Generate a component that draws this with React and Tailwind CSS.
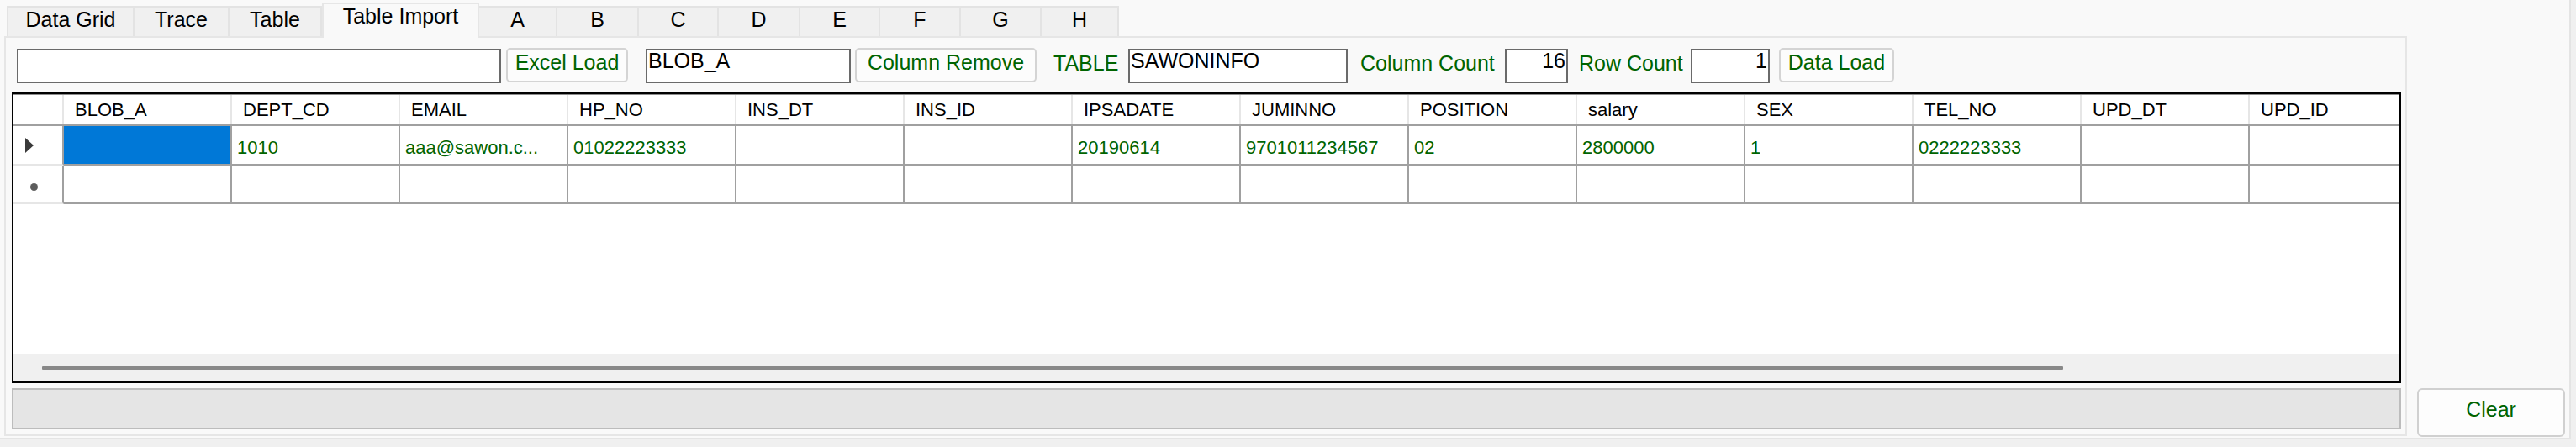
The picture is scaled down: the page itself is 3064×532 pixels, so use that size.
import React from 'react';

const tabs = [
  { label: 'Data Grid', w: 'w-[152px]' },
  { label: 'Trace', w: 'w-[113px]' },
  { label: 'Table', w: 'w-[110px]' },
  { label: 'Table Import', w: 'w-[187px]', active: true },
  { label: 'A', w: 'w-[93px]' },
  { label: 'B', w: 'w-[97px]' },
  { label: 'C', w: 'w-[95px]' },
  { label: 'D', w: 'w-[97px]' },
  { label: 'E', w: 'w-[95px]' },
  { label: 'F', w: 'w-[96px]' },
  { label: 'G', w: 'w-[96px]' },
  { label: 'H', w: 'w-[92px]' },
];

const columns = [
  'BLOB_A', 'DEPT_CD', 'EMAIL', 'HP_NO', 'INS_DT', 'INS_ID', 'IPSADATE',
  'JUMINNO', 'POSITION', 'salary', 'SEX', 'TEL_NO', 'UPD_DT', 'UPD_ID',
];

const row = [
  '', '1010', 'aaa@sawon.c...', '01022223333', '', '', '20190614',
  '9701011234567', '02', '2800000', '1', '0222223333', '', '',
];

function TextBox({ value = '', className = '', right = false }) {
  return (
    <div
      className={`mt-[2px] h-[41px] shrink-0 border-2 border-[#6a6a6a] bg-white px-[1px] text-[25px] leading-[25px] text-black ${right ? 'text-right' : ''} ${className}`}
    >
      {value}
    </div>
  );
}

function Button({ children, className = '' }) {
  return (
    <button
      className={`mt-[1px] flex h-[41px] shrink-0 items-center justify-center rounded-[5px] border-2 border-[#d4d4d4] bg-[#fcfcfc] pb-[6px] text-[25px] text-[#006400] ${className}`}
    >
      {children}
    </button>
  );
}

function Label({ children, className = '' }) {
  return (
    <div className={`flex h-[43px] shrink-0 items-center pb-[4px] text-[25px] text-[#006400] ${className}`}>
      {children}
    </div>
  );
}

export default function App() {
  return (
    <div className="h-[532px] w-[3064px] overflow-hidden bg-[#f0f0f0] font-['Liberation_Sans',Arial,sans-serif]">
      <div className="flex h-[523px] w-[3058px] border-b-2 border-r-2 border-[#e4e4e4] bg-[#f9f9f9]">
        {/* Tab control */}
        <div className="w-[2863px] shrink-0 pl-[5px]">
          <div className="flex h-[43px] items-end pl-[3px]">
            {tabs.map((t, i) =>
              t.active ? (
                <div
                  key={t.label}
                  className={`${t.w} relative z-10 -mb-[2px] h-[42px] shrink-0 border-2 border-b-0 border-[#e6e6e6] bg-[#f9f9f9] text-center text-[25px] leading-[29px] text-black`}
                >
                  {t.label}
                </div>
              ) : (
                <div
                  key={t.label}
                  className={`${t.w} h-[36px] shrink-0 border-r-2 border-t-2 border-[#e3e3e3] bg-[#f0f0f0] text-center text-[25px] leading-[29px] text-black ${i === 0 ? 'border-l-2' : ''}`}
                >
                  {t.label}
                </div>
              )
            )}
          </div>

          {/* Tab page */}
          <div className="flex h-[476px] w-[2858px] flex-col border-2 border-[#e6e6e6] bg-[#f9f9f9] pb-[6px] pl-[7px] pr-[5px] pt-[11px]">
            {/* Toolbar */}
            <div className="flex h-[43px] items-start pl-[6px]">
              <TextBox className="w-[576px]" />
              <Button className="ml-[6px] w-[145px]">Excel Load</Button>
              <TextBox value="BLOB_A" className="ml-[21px] w-[244px]" />
              <Button className="ml-[5px] w-[216px]">Column Remove</Button>
              <Label className="w-[109px] pl-[20px]">TABLE</Label>
              <TextBox value="SAWONINFO" className="w-[261px]" />
              <Label className="w-[187px] pl-[15px]">Column Count</Label>
              <TextBox value="16" right className="w-[75px]" />
              <Label className="w-[146px] pl-[13px]">Row Count</Label>
              <TextBox value="1" right className="w-[94px]" />
              <Button className="ml-[11px] w-[137px]">Data Load</Button>
            </div>

            {/* Grid */}
            <div className="mt-[11px] flex h-[346px] flex-col overflow-hidden border-2 border-black bg-white">
              {/* Header */}
              <div className="flex h-[38px] shrink-0 border-b-2 border-t border-b-[#a0a0a0] border-t-[#8c8c8c] text-[22px] text-black">
                <div className="w-[60px] shrink-0 border-r-2 border-[#e6e6e6]" />
                {columns.map((c) => (
                  <div key={c} className="flex w-[200px] shrink-0 items-center border-r-2 border-[#e6e6e6] pl-[13px]">
                    {c}
                  </div>
                ))}
              </div>

              {/* Data row */}
              <div className="flex h-[47px] shrink-0 text-[22px] text-[#006400]">
                <div className="flex w-[60px] shrink-0 items-center border-b-2 border-r-2 border-b-[#e6e6e6] border-r-[#a0a0a0] pl-[14px]">
                  <svg width="10" height="18" viewBox="0 0 10 18">
                    <path d="M0 0 L10 9 L0 18 Z" fill="#3a3a3a" />
                  </svg>
                </div>
                {row.map((v, i) => (
                  <div
                    key={i}
                    className={`flex w-[200px] shrink-0 items-center overflow-hidden whitespace-nowrap border-b-2 border-r-2 border-[#a0a0a0] pl-[6px] pt-[5px] ${i === 0 ? 'bg-[#0078d7]' : ''}`}
                  >
                    {v}
                  </div>
                ))}
              </div>

              {/* New row */}
              <div className="flex h-[46px] shrink-0">
                <div className="flex w-[60px] shrink-0 items-center border-b-2 border-r-2 border-b-[#e6e6e6] border-r-[#a0a0a0] pl-[20px] pt-[6px]">
                  <div className="h-[9px] w-[9px] rounded-full bg-[#5c5c5c] blur-[0.5px]" />
                </div>
                {columns.map((c) => (
                  <div key={c} className="w-[200px] shrink-0 border-b-2 border-r-2 border-[#a0a0a0]" />
                ))}
              </div>

              <div className="flex-1" />

              {/* Horizontal scrollbar */}
              <div className="h-[33px] shrink-0 bg-[#f0f0f0] pl-[34px] pt-[15px]">
                <div className="h-[4px] w-[2404px] rounded-[1px] bg-[#888888]" />
              </div>
            </div>

            {/* Status bar */}
            <div className="mt-[6px] h-[49px] border-2 border-[#bcbcbc] bg-[#e5e5e5]" />
          </div>
        </div>

        {/* Right column */}
        <div className="flex flex-1 items-end pb-[1px]">
          <button className="ml-[12px] flex h-[58px] w-[176px] items-center justify-center rounded-[6px] border-2 border-[#d0d0d0] bg-[#fdfdfd] pb-[6px] text-[25px] text-[#006400]">
            Clear
          </button>
        </div>
      </div>
    </div>
  );
}
